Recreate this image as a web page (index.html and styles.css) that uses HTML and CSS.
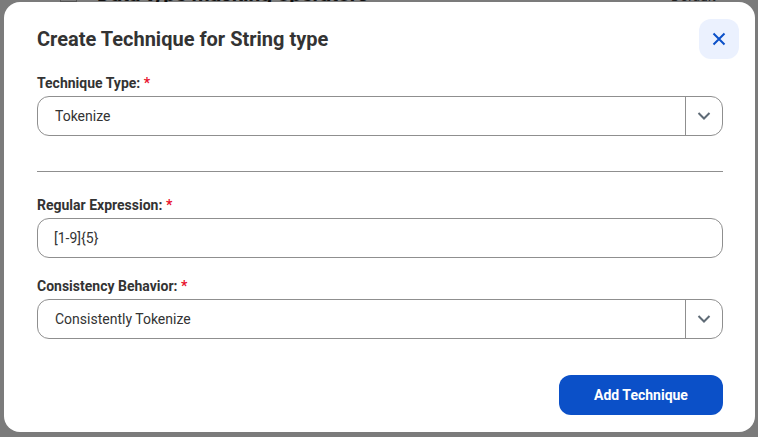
FILE: index.html
```html
<!DOCTYPE html>
<html lang="en">
<head>
<meta charset="utf-8">
<title>Create Technique</title>
<link rel="stylesheet" href="styles.css">
</head>
<body>
<div class="backdrop">
  <span class="back-box"></span>
  <span class="back-title">Data type masking operators</span>
  <span class="back-note">Default</span>
</div>
<div class="modal">
  <header class="modal-head">
    <h1 class="title">Create Technique for String type</h1>
    <button class="close" aria-label="Close">
      <svg width="14" height="14" viewBox="0 0 14 14"><path d="M1.5 1.5 12.5 12.5M12.5 1.5 1.5 12.5" fill="none" stroke="#0b50c8" stroke-width="2"/></svg>
    </button>
  </header>
  <div class="field">
    <label class="label">Technique Type: <span class="req">*</span></label>
    <div class="control select">
      <span class="value">Tokenize</span>
      <span class="caret"><svg width="14" height="8" viewBox="0 0 14 8"><path d="M1.5 1 7 6.5 12.5 1" fill="none" stroke="#5f6b76" stroke-width="2"/></svg></span>
    </div>
  </div>
  <hr class="rule">
  <div class="field">
    <label class="label">Regular Expression: <span class="req">*</span></label>
    <div class="control input"><span class="value">[1-9]{5}</span></div>
  </div>
  <div class="field second">
    <label class="label">Consistency Behavior: <span class="req">*</span></label>
    <div class="control select">
      <span class="value">Consistently Tokenize</span>
      <span class="caret"><svg width="14" height="8" viewBox="0 0 14 8"><path d="M1.5 1 7 6.5 12.5 1" fill="none" stroke="#5f6b76" stroke-width="2"/></svg></span>
    </div>
  </div>
  <footer class="modal-foot"><button class="primary">Add Technique</button></footer>
</div>
</body>
</html>
```
FILE: styles.css
```css
* { box-sizing: border-box; }
html, body { margin: 0; height: 100%; }
body {
  position: relative;
  width: 758px;
  height: 437px;
  overflow: hidden;
  background: #7b7b7b;
  padding: 2px 3px 5px 4px;
  font-family: Roboto, "Liberation Sans", sans-serif;
  color: #333;
}
.backdrop {
  position: absolute;
  top: 0;
  left: 0;
  width: 100%;
  height: 2px;
  overflow: hidden;
}
.back-box {
  position: absolute;
  top: -14px;
  left: 60px;
  width: 17px;
  height: 16px;
  border: 1px solid #555;
}
.back-title {
  position: absolute;
  top: -18px;
  left: 97px;
  font-size: 21px;
  line-height: 24px;
  font-weight: 700;
  color: #111;
  white-space: nowrap;
}
.back-note {
  position: absolute;
  top: -13px;
  left: 671px;
  font-size: 14px;
  line-height: 18px;
  color: #222;
}
.modal {
  position: relative;
  width: 751px;
  height: 430px;
  background: #fff;
  border-radius: 16px;
  padding: 17px 32px 0 33px;
  display: flex;
  flex-direction: column;
}
.modal-head {
  display: flex;
  align-items: flex-start;
  justify-content: space-between;
  height: 54px;
  margin-right: -16px;
}
.title {
  margin: 0;
  padding-top: 8px;
  font-size: 20px;
  line-height: 24px;
  font-weight: 700;
  color: #333;
}
.close {
  width: 40px;
  height: 40px;
  border: 0;
  border-radius: 12px;
  background: #ebf1fe;
  padding: 0;
  display: flex;
  align-items: center;
  justify-content: center;
}
.label {
  display: block;
  font-size: 14px;
  line-height: 20px;
  font-weight: 700;
  color: #333;
  margin-bottom: 3px;
}
.req { color: #e8112d; }
.control {
  height: 40px;
  border: 1px solid #8f8f8f;
  border-radius: 12px;
  display: flex;
  align-items: center;
  font-size: 14px;
  color: #333;
}
.value { flex: 1; padding-left: 17px; }
.input .value { padding-left: 16px; }
.caret {
  width: 37px;
  height: 100%;
  border-left: 1px solid #8f8f8f;
  display: flex;
  align-items: center;
  justify-content: center;
}
.rule {
  margin: 35px 0 23px;
  border: 0;
  border-top: 1px solid #8f8f8f;
  width: 100%;
}
.second { margin-top: 18px; }
.modal-foot {
  margin-top: 36px;
  display: flex;
  justify-content: flex-end;
}
.primary {
  width: 164px;
  height: 40px;
  border: 0;
  border-radius: 12px;
  background: #0b50c8;
  color: #fff;
  font-family: inherit;
  font-size: 14px;
  font-weight: 700;
}
```
